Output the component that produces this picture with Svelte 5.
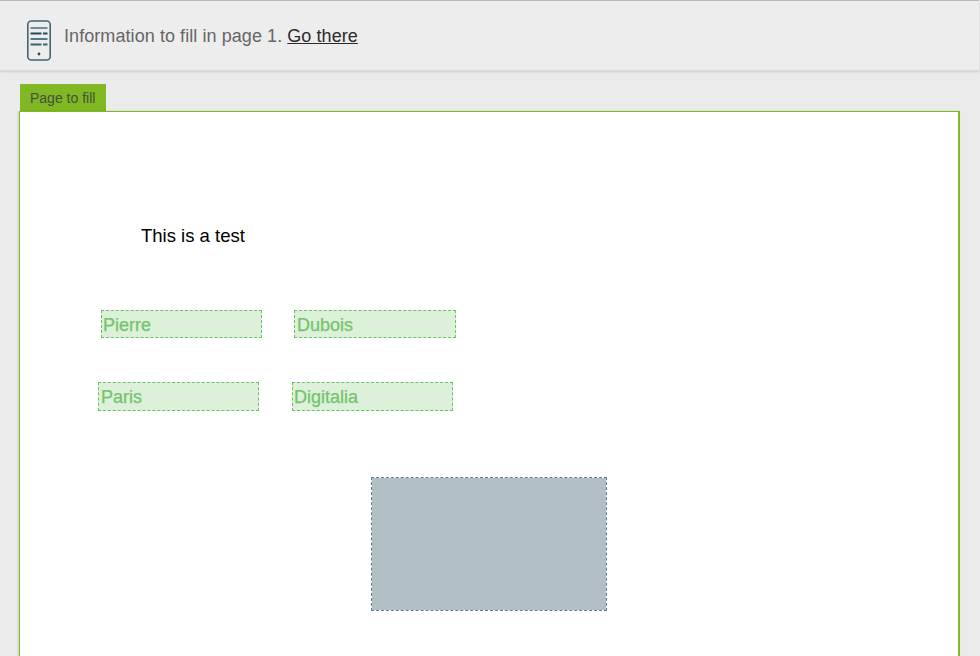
<script lang="ts">
    interface Field {
        value: string;
        left: number;
        top: number;
        width: number;
        height: number;
        pad: number;
    }

    const fields: Field[] = [
        { value: "Pierre", left: 81, top: 198, width: 161, height: 28, pad: 1 },
        { value: "Dubois", left: 274, top: 198, width: 162, height: 28, pad: 2 },
        { value: "Paris", left: 78, top: 270, width: 161, height: 29, pad: 2 },
        { value: "Digitalia", left: 272, top: 270, width: 161, height: 29, pad: 1 },
    ];
</script>

<div class="screen">
    <header class="notice">
        <svg class="phone" width="26" height="42" viewBox="0 0 26 42" fill="none">
            <rect x="1.8" y="1" width="22.4" height="39" rx="3.5" stroke="#40666f" stroke-width="1.6" />
            <path d="M4.5 8h17" stroke="#4f7380" stroke-width="1.6" />
            <path d="M4.5 13.5h11M17 13.5h4.5" stroke="#1f4d5e" stroke-width="2" />
            <path d="M4.5 19h17" stroke="#2e5a6b" stroke-width="1.6" />
            <path d="M4.5 24.5h11M17 24.5h4.5" stroke="#3a6373" stroke-width="2" />
            <circle cx="13" cy="34" r="1.4" fill="#1f4d5e" />
        </svg>
        <p>Information to fill in page 1. <a href="#page">Go there</a></p>
    </header>

    <main class="content">
        <div class="tab">Page to fill</div>
        <section class="page" id="page">
            <span class="caption">This is a test</span>
            {#each fields as field}
                <div
                    class="field"
                    style="left: {field.left}px; top: {field.top}px; width: {field.width}px; height: {field.height}px; padding-left: {field.pad}px"
                >
                    {field.value}
                </div>
            {/each}
            <div class="picture"></div>
        </section>
    </main>
</div>

<style>
    :global(body) {
        background: #ebebeb;
        overflow: hidden;
    }

    .screen {
        height: 656px;
        overflow: hidden;
        font-family: "Liberation Sans", Arial, sans-serif;
        background: #ebebeb;
    }

    .notice {
        display: flex;
        align-items: center;
        gap: 12px;
        height: 71px;
        padding-left: 26px;
        box-sizing: border-box;
        background: #ededed;
        border-top: 1px solid #b9b9b9;
        border-bottom: 1px solid #dcdcdc;
        box-shadow: 0 1px 2px rgba(0, 0, 0, 0.12);
        margin-right: 1px;
    }

    .phone {
        flex-shrink: 0;
        margin-top: 10px;
    }

    .notice p {
        margin: 2px 0 0;
        font-size: 18px;
        letter-spacing: 0.07px;
        color: #666;
    }

    .notice a {
        color: #2a2a2a;
    }

    .content {
        padding: 13px 20px 0 19px;
    }

    .tab {
        width: 86px;
        height: 27px;
        margin-left: 1px;
        box-sizing: border-box;
        padding-left: 10px;
        background: #7fb823;
        color: #44503a;
        font-size: 14px;
        line-height: 28px;
    }

    .page {
        position: relative;
        height: 600px;
        background: #fff;
        border: 1px solid #7fb823;
        border-right-width: 2px;
        box-shadow: -1px 0 2px rgba(0, 0, 0, 0.12);
    }

    .caption {
        position: absolute;
        left: 121px;
        top: 113px;
        font-size: 18.5px;
        color: #000;
    }

    .field {
        position: absolute;
        box-sizing: border-box;
        background: #ddf0da;
        border: 1px dashed #6cc365;
        color: #73c46c;
        font-size: 18px;
        line-height: 28px;
        -webkit-text-stroke: 0.25px #73c46c;
    }

    .picture {
        position: absolute;
        left: 351px;
        top: 365px;
        width: 236px;
        height: 134px;
        box-sizing: border-box;
        background: #b1c0c5;
        background-clip: padding-box;
        border: 1px dashed #607d8b;
    }
</style>
